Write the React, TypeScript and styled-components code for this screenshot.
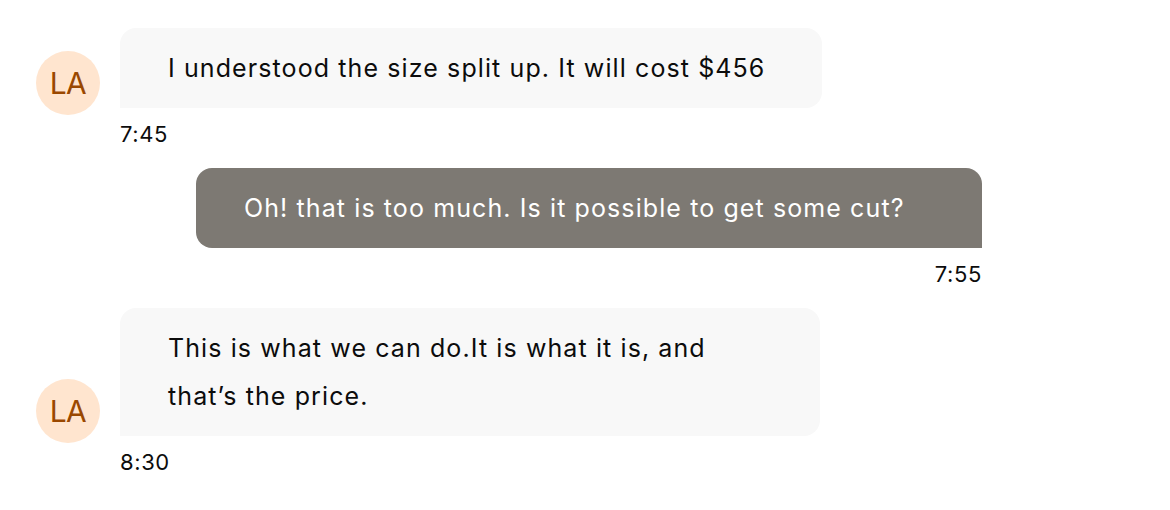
import styled, { createGlobalStyle } from "styled-components";

const GlobalStyle = createGlobalStyle`
  body {
    margin: 0;
    background: #ffffff;
    font-family: "Inter", "Noto Sans", sans-serif;
  }
`;

type Msg = {
  id: number;
  text: React.ReactNode;
  time: string;
  mine?: boolean;
  width: number;
};

const messages: Msg[] = [
  {
    id: 1,
    text: "I understood the size split up. It will cost $456",
    time: "7:45",
    width: 702,
  },
  {
    id: 2,
    text: "Oh! that is too much. Is it possible to get some cut?",
    time: "7:55",
    mine: true,
    width: 786,
  },
  {
    id: 3,
    text: (
      <>
        This is what we can do.It is what it is, and
        <br />
        that’s the price.
      </>
    ),
    time: "8:30",
    width: 700,
  },
];

function App() {
  return (
    <>
      <GlobalStyle />
      <Thread>
        {messages.map((m) =>
          m.mine ? (
            <OutRow key={m.id}>
              <Bubble $mine $width={m.width}>
                {m.text}
              </Bubble>
              <Time $right>{m.time}</Time>
            </OutRow>
          ) : (
            <InRow key={m.id}>
              <Avatar>LA</Avatar>
              <Bubble $width={m.width}>{m.text}</Bubble>
              <Time>{m.time}</Time>
            </InRow>
          )
        )}
      </Thread>
    </>
  );
}
export default App;

const Thread = styled.div`
  display: flex;
  flex-direction: column;
  gap: 20px;
  padding: 28px 0 0 36px;
  width: 946px;
`;

const InRow = styled.div`
  display: grid;
  grid-template-columns: 64px auto;
  column-gap: 20px;
  row-gap: 12px;
  justify-content: start;

  & > span:last-child {
    grid-column: 2;
  }
`;

const OutRow = styled.div`
  display: flex;
  flex-direction: column;
  align-items: flex-end;
  gap: 12px;
`;

const Avatar = styled.div`
  align-self: end;
  margin-bottom: -7px;
  width: 64px;
  height: 64px;
  border-radius: 50%;
  background-color: #ffe5cf;
  color: #9a4800;
  display: flex;
  align-items: center;
  justify-content: center;
  font-size: 30px;
  letter-spacing: -0.5px;
`;

const Bubble = styled.div<{ $mine?: boolean; $width: number }>`
  box-sizing: border-box;
  width: ${(p) => p.$width}px;
  padding: 16px 48px;
  font-size: 25px;
  line-height: 48px;
  letter-spacing: 1.1px;
  color: ${(p) => (p.$mine ? "#ffffff" : "#0c0c0c")};
  background-color: ${(p) => (p.$mine ? "#7d7973" : "#f8f8f8")};
  border-radius: ${(p) => (p.$mine ? "16px 16px 0 16px" : "16px 16px 16px 0")};
`;

const Time = styled.span<{ $right?: boolean }>`
  font-size: 22px;
  line-height: 28px;
  letter-spacing: 0.6px;
  color: #0c0c0c;
  text-align: ${(p) => (p.$right ? "right" : "left")};
`;
